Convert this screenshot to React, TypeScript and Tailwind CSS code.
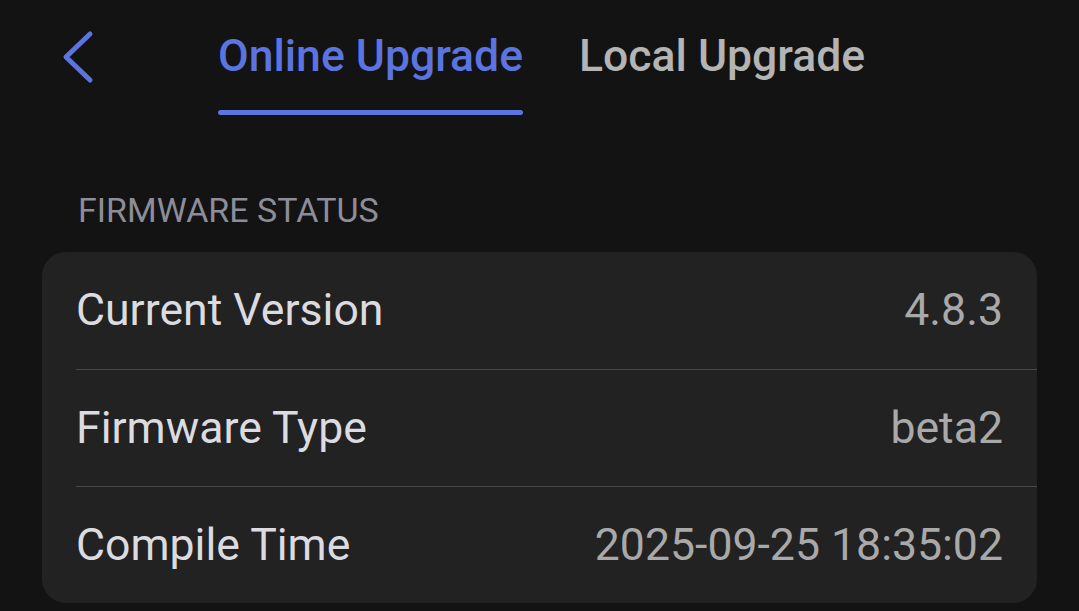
import React from 'react';

const rows = [
  { label: 'Current Version', value: '4.8.3' },
  { label: 'Firmware Type', value: 'beta2' },
  { label: 'Compile Time', value: '2025-09-25 18:35:02' },
];

const App: React.FC = () => {
  return (
    <div
      className="w-[1079px] h-[611px] overflow-hidden bg-[#131313]"
      style={{ fontFamily: 'Roboto, "Noto Sans", sans-serif' }}
    >
      {/* Header with tabs */}
      <div className="h-[116px] flex items-start">
        <button className="ml-[61px] mt-[30px] w-[34px] h-[54px] flex items-center justify-center text-[#5b74e0]">
          <svg viewBox="0 0 34 54" className="w-[34px] h-[54px]" fill="none" stroke="currentColor" strokeWidth={5} strokeLinecap="round" strokeLinejoin="round">
            <path d="M29 4 5 27l24 23" />
          </svg>
        </button>
        <div className="flex ml-[123px] gap-[56px]">
          <div className="flex flex-col items-stretch">
            <span className="pt-[30px] text-[44.5px] leading-[52px] font-medium text-[#5b74e0] whitespace-nowrap">Online Upgrade</span>
            <div className="h-[5px] rounded-full bg-[#5b74e0] mt-[28px]" />
          </div>
          <span className="pt-[30px] text-[44.5px] leading-[52px] font-medium text-[#b4b4b4] whitespace-nowrap">Local Upgrade</span>
        </div>
      </div>

      <div className="px-[42px] pt-[72px]">
        <div className="pl-[36px] text-[34px] leading-[44px] text-[#8d8d99]">FIRMWARE STATUS</div>
        <div className="mt-[20px] w-[995px] rounded-[24px] bg-[#222222] pl-[34px]">
          {rows.map((r, i) => (
            <div
              key={r.label}
              className={`flex items-center justify-between pr-[34px] h-[117px] ${i > 0 ? 'border-t border-[#4a4a4a]' : ''}`}
            >
              <span className="text-[44.6px] text-[#dcdce0]">{r.label}</span>
              <span className="text-[44.6px] text-[#a9a9a9]">{r.value}</span>
            </div>
          ))}
        </div>
      </div>
    </div>
  );
};

export default App;
